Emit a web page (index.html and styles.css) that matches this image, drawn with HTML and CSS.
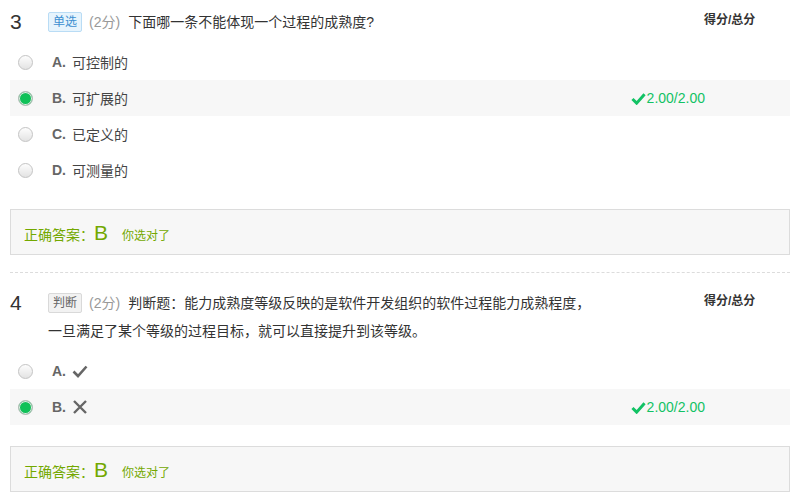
FILE: index.html
```html
<!DOCTYPE html>
<html lang="zh">
<head>
<meta charset="utf-8">
<link rel="stylesheet" href="styles.css">
</head>
<body>
<div class="page">
  <div class="question">
    <div class="q-head">
      <div class="q-num">3</div>
      <div class="q-title"><span class="tag tag-blue">单选</span><span class="points">(2分)</span><span>下面哪一条不能体现一个过程的成熟度?</span></div>
      <div class="q-score-label">得分/总分</div>
    </div>
    <div class="options">
      <div class="option"><span class="radio"></span><span class="letter">A.</span><span class="opt-text">可控制的</span></div>
      <div class="option selected"><span class="radio checked"></span><span class="letter">B.</span><span class="opt-text">可扩展的</span><span class="score"><svg class="tick" viewBox="0 0 16 14" width="15" height="13"><path d="M1.5 7.5 L6 12 L14.5 2.5" fill="none" stroke="currentColor" stroke-width="3.2"/></svg>2.00/2.00</span></div>
      <div class="option"><span class="radio"></span><span class="letter">C.</span><span class="opt-text">已定义的</span></div>
      <div class="option"><span class="radio"></span><span class="letter">D.</span><span class="opt-text">可测量的</span></div>
    </div>
    <div class="answer"><span class="ans-label">正确答案：</span><span class="ans-key">B</span><span class="ans-note">你选对了</span></div>
  </div>
  <div class="question divided">
    <div class="q-head">
      <div class="q-num">4</div>
      <div class="q-title"><span class="tag tag-gray">判断</span><span class="points">(2分)</span><span>判断题：能力成熟度等级反映的是软件开发组织的软件过程能力成熟程度，</span><span>一旦满足了某个等级的过程目标，就可以直接提升到该等级。</span></div>
      <div class="q-score-label">得分/总分</div>
    </div>
    <div class="options">
      <div class="option"><span class="radio"></span><span class="letter">A.</span><svg class="mark" viewBox="0 0 16 14" width="16" height="14"><path d="M1.5 7.5 L6 12 L14.5 2.5" fill="none" stroke="#666" stroke-width="2.6"/></svg></div>
      <div class="option selected"><span class="radio checked"></span><span class="letter">B.</span><svg class="mark" viewBox="0 0 16 16" width="16" height="16"><path d="M2 2 L14 14 M14 2 L2 14" fill="none" stroke="#666" stroke-width="2.4"/></svg><span class="score"><svg class="tick" viewBox="0 0 16 14" width="15" height="13"><path d="M1.5 7.5 L6 12 L14.5 2.5" fill="none" stroke="currentColor" stroke-width="3.2"/></svg>2.00/2.00</span></div>
    </div>
    <div class="answer"><span class="ans-label">正确答案：</span><span class="ans-key">B</span><span class="ans-note">你选对了</span></div>
  </div>
</div>
</body>
</html>
```

FILE: styles.css
```css
* { box-sizing: border-box; }
html, body { margin: 0; padding: 0; background: #fff; }
body {
  font-family: "Liberation Sans", "Noto Sans CJK SC", Arial, sans-serif;
  color: #333;
  font-size: 14px;
}
.page {
  width: 780px;
  margin-left: 10px;
}
.question { padding-top: 8px; }
.question.divided {
  margin-top: 17px;
  border-top: 1px dashed #dcdcdc;
  padding-top: 16px;
}
.q-head {
  display: flex;
  align-items: flex-start;
}
.q-num {
  width: 38px;
  font-size: 21px;
  line-height: 28px;
  color: #333;
  font-family: "Liberation Sans", Arial, sans-serif;
}
.q-title {
  width: 552px;
  line-height: 28px;
  font-size: 14px;
  color: #333;
}
.tag {
  display: inline-block;
  font-size: 12px;
  line-height: 18px;
  padding: 0 4px;
  border: 1px solid;
  border-radius: 2px;
  margin-right: 7px;
  vertical-align: 1px;
}
.tag-blue { background: #e6f4fd; border-color: #b9dcf5; color: #3d8fd0; }
.tag-gray { background: #f2f2f2; border-color: #d9d9d9; color: #666; }
.points { color: #999; margin-right: 8px; }
.q-score-label {
  margin-left: auto;
  width: 86px;
  font-size: 12px;
  font-weight: bold;
  line-height: 24px;
  color: #333;
}
.options { margin-top: 8px; }
.option {
  display: flex;
  align-items: center;
  height: 36px;
  padding-left: 8px;
}
.option.selected { background: #f7f7f7; }
.radio {
  width: 15px;
  height: 15px;
  border-radius: 50%;
  border: 1px solid #c4c4c4;
  background: linear-gradient(#fdfdfd, #e3e3e3);
  margin-right: 19px;
  flex: none;
}
.radio.checked {
  background: #0fc158;
  border: 1px solid #bdbdbd;
  box-shadow: inset 0 0 0 1px #e9e9e9;
}
.letter {
  font-weight: bold;
  color: #666;
  font-size: 14px;
  margin-right: 6px;
}
.opt-text { color: #444; }
.mark { display: block; }
.score {
  margin-left: auto;
  margin-right: 85px;
  color: #12c264;
  font-size: 14px;
  display: flex;
  align-items: center;
}
.tick { margin-right: 1px; }
.answer {
  margin-top: 21px;
  height: 46px;
  border: 1px solid #dcdcdc;
  background: #f7f7f7;
  padding: 11px 0 0 13px;
  color: #73a800;
  display: flex;
  align-items: baseline;
}
.ans-label { font-size: 14px; }
.ans-key { font-size: 21px; margin: 0 14px 0 0; }
.ans-note { font-size: 12px; }
```
